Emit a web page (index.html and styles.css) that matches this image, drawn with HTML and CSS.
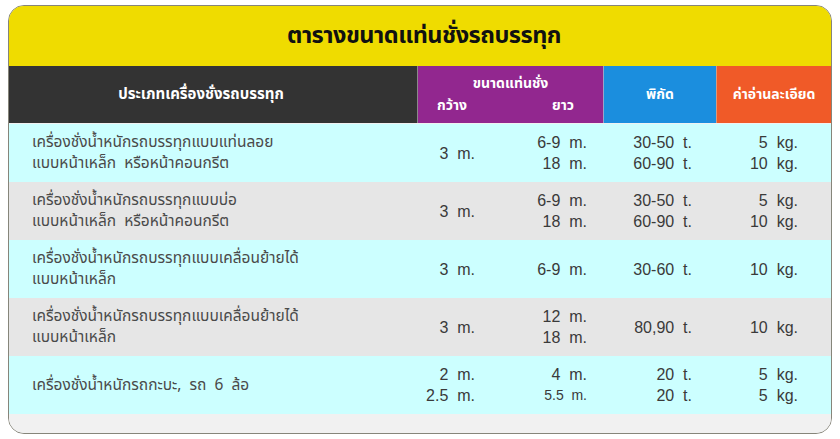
FILE: index.html
```html
<!DOCTYPE html>
<html lang="th">
<head>
<meta charset="utf-8">
<title>ตารางขนาดแท่นชั่งรถบรรทุก</title>
<link rel="stylesheet" href="styles.css">
</head>
<body>
<div class="card">
  <div class="title">ตารางขนาดแท่นชั่งรถบรรทุก</div>
  <div class="table">
    <div class="th th-type">ประเภทเครื่องชั่งรถบรรทุก</div>
    <div class="th th-size">
      <div class="size-top">ขนาดแท่นชั่ง</div>
      <div class="size-sub"><span>กว้าง</span><span>ยาว</span></div>
    </div>
    <div class="th th-cap">พิกัด</div>
    <div class="th th-res">ค่าอ่านละเอียด</div>

    <div class="td name cyan">เครื่องชั่งน้ำหนักรถบรรทุกแบบแท่นลอย<br>แบบหน้าเหล็ก&nbsp; หรือหน้าคอนกรีต</div>
    <div class="td num w cyan">3&nbsp; m.</div>
    <div class="td num l cyan">6-9&nbsp; m.<br>18&nbsp; m.</div>
    <div class="td num t cyan">30-50&nbsp; t.<br>60-90&nbsp; t.</div>
    <div class="td num k cyan">5&nbsp; kg.<br>10&nbsp; kg.</div>

    <div class="td name grey">เครื่องชั่งน้ำหนักรถบรรทุกแบบบ่อ<br>แบบหน้าเหล็ก&nbsp; หรือหน้าคอนกรีต</div>
    <div class="td num w grey">3&nbsp; m.</div>
    <div class="td num l grey">6-9&nbsp; m.<br>18&nbsp; m.</div>
    <div class="td num t grey">30-50&nbsp; t.<br>60-90&nbsp; t.</div>
    <div class="td num k grey">5&nbsp; kg.<br>10&nbsp; kg.</div>

    <div class="td name cyan">เครื่องชั่งน้ำหนักรถบรรทุกแบบเคลื่อนย้ายได้<br>แบบหน้าเหล็ก</div>
    <div class="td num w cyan">3&nbsp; m.</div>
    <div class="td num l cyan">6-9&nbsp; m.</div>
    <div class="td num t cyan">30-60&nbsp; t.</div>
    <div class="td num k cyan">10&nbsp; kg.</div>

    <div class="td name grey">เครื่องชั่งน้ำหนักรถบรรทุกแบบเคลื่อนย้ายได้<br>แบบหน้าเหล็ก</div>
    <div class="td num w grey">3&nbsp; m.</div>
    <div class="td num l grey">12&nbsp; m.<br>18&nbsp; m.</div>
    <div class="td num t grey">80,90&nbsp; t.</div>
    <div class="td num k grey">10&nbsp; kg.</div>

    <div class="td name cyan">เครื่องชั่งน้ำหนักรถกะบะ,&nbsp; รถ&nbsp; 6&nbsp; ล้อ</div>
    <div class="td num w cyan">2&nbsp; m.<br>2.5&nbsp; m.</div>
    <div class="td num l cyan">4&nbsp; m.<br><span class="small">5.5&nbsp; m.</span></div>
    <div class="td num t cyan">20&nbsp; t.<br>20&nbsp; t.</div>
    <div class="td num k cyan">5&nbsp; kg.<br>5&nbsp; kg.</div>
  </div>
  <div class="foot"></div>
</div>
</body>
</html>
```

FILE: styles.css
```css
html, body {
  margin: 0;
  padding: 0;
  background: #ffffff;
}

body {
  padding: 5px 8px 0 8px;
  font-family: "Noto Sans Thai", "Noto Sans", "DejaVu Sans", sans-serif;
}

.card {
  width: 822px;
  border: 1px solid #86857a;
  border-radius: 16px;
  overflow: hidden;
  background: #f1f1f1;
}

.title {
  height: 60px;
  background: #efdc00;
  color: #111;
  font-size: 23.5px;
  font-weight: 700;
  display: flex;
  align-items: center;
  justify-content: center;
  letter-spacing: -0.5px;
  padding-left: 8px;
}

.table {
  display: grid;
  grid-template-columns: 409px 93px 93px 113px 114px;
  grid-auto-rows: 58px;
}

.th {
  height: 57px;
  color: #fff;
  font-size: 14px;
  font-weight: 700;
  display: flex;
  align-items: center;
  justify-content: center;
  box-sizing: border-box;
}

.th-type {
  background: #333333;
  border-right: 1px solid #8a8a8a;
  font-size: 15px;
  padding-right: 24px;
}

.th-size {
  grid-column: span 2;
  background: #92278f;
  flex-direction: column;
  align-items: stretch;
  justify-content: center;
  border-right: 1px solid #9aa3c8;
}

.size-top {
  text-align: center;
  line-height: 22px;
}

.size-sub {
  display: flex;
  justify-content: space-between;
  padding: 0 29px 0 19px;
  line-height: 22px;
}

.th-cap {
  background: #1b8ede;
  border-right: 1px solid #d79a80;
}

.th-res {
  background: #f05a28;
}

.td {
  display: flex;
  flex-direction: column;
  justify-content: center;
  color: #444;
  line-height: 21px;
}

.cyan { background: #ccffff; }
.grey { background: #e6e6e6; }

.name {
  padding-left: 23px;
  font-size: 15.5px;
  color: #4a4a4a;
}

.num {
  font-family: "Liberation Sans", Arial, sans-serif;
  font-size: 16px;
  text-align: right;
  color: #3a3a3a;
}

.w { padding-right: 36px; }
.l { padding-right: 17px; }
.t { padding-right: 25px; }
.k { padding-right: 33px; }

.small { font-size: 14px; }

.foot {
  height: 19px;
  background: #f1f1f1;
}
```
